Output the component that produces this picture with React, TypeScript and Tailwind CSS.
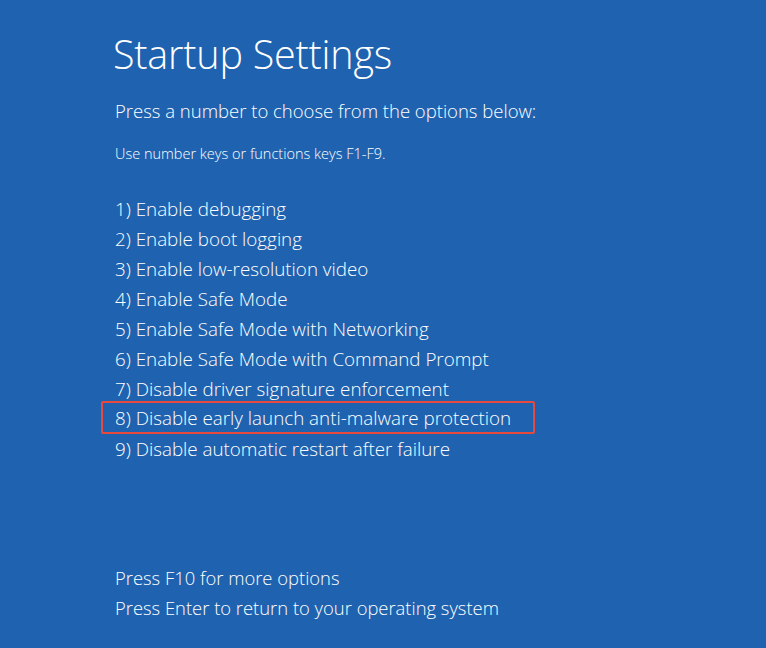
import React from "react";

const options = [
  "1) Enable debugging",
  "2) Enable boot logging",
  "3) Enable low-resolution video",
  "4) Enable Safe Mode",
  "5) Enable Safe Mode with Networking",
  "6) Enable Safe Mode with Command Prompt",
  "7) Disable driver signature enforcement",
  "8) Disable early launch anti-malware protection",
  "9) Disable automatic restart after failure",
];

export default function App() {
  return (
    <div
      className="w-[766px] h-[648px] bg-[#1f63b0] text-white overflow-hidden"
      style={{ fontFamily: '"Open Sans", "Noto Sans", sans-serif' }}
    >
      <div className="pl-[113px] pt-[27px] flex flex-col">
        <h1 className="text-[39.5px] leading-[54px] font-light tracking-[-0.2px]">Startup Settings</h1>
        <p className="mt-[17px] pl-[2px] text-[18.5px] leading-[26px] font-light">
          Press a number to choose from the options below:
        </p>
        <p className="mt-[20px] text-[14.5px] leading-[20px] font-light pl-[2px]">
          Use number keys or functions keys F1-F9.
        </p>
        <ul className="mt-[30px] flex flex-col">
          {options.map((o, i) => (
            <li
              key={o}
              className={
                i === 7
                  ? "ml-[-12px] w-[434px] h-[33px] border-2 border-[#e9483d] rounded-[2px] pl-[12px] pt-[1px] text-[18.8px] leading-[28px] font-light mt-[-3px] mb-[0px]"
                  : "h-[30px] pl-[2px] text-[18.8px] leading-[30px] font-light"
              }
            >
              {o}
            </li>
          ))}
        </ul>
        <div className="mt-[99px] flex flex-col pl-[2px]">
          <p className="text-[18.4px] leading-[30px] font-light">Press F10 for more options</p>
          <p className="text-[18.4px] leading-[30px] font-light">Press Enter to return to your operating system</p>
        </div>
      </div>
    </div>
  );
}
